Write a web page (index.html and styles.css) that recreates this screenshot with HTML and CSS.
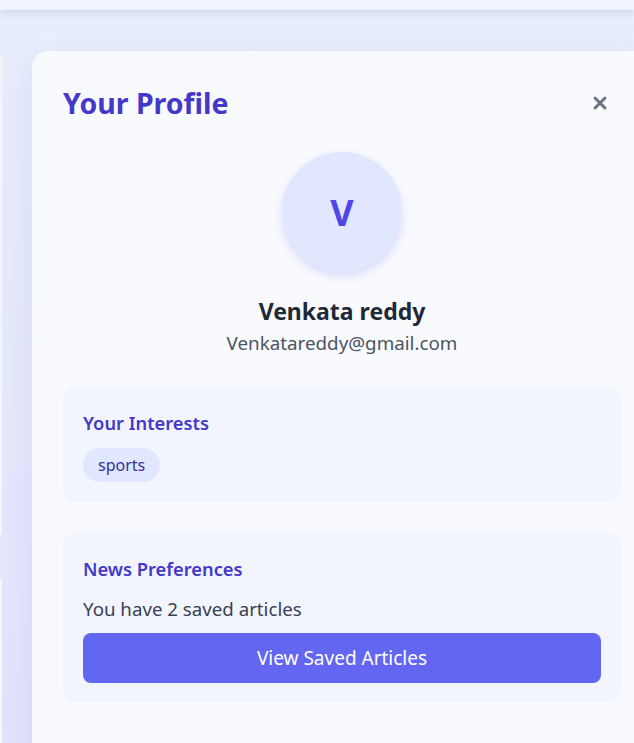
FILE: index.html
```html
<!DOCTYPE html>
<html lang="en">
<head>
<meta charset="utf-8">
<title>Your Profile</title>
<link rel="stylesheet" href="styles.css">
</head>
<body>
<header class="topbar"></header>
<div class="layout">
  <aside class="side">
    <div class="side-card side-card-a"></div>
    <div class="side-card side-card-b"></div>
  </aside>
  <section class="panel">
    <div class="panel-head">
      <h2 class="panel-title">Your Profile</h2>
      <button class="close" aria-label="Close">
        <svg width="16" height="16" viewBox="0 0 16 16"><path d="M3 3 L13 13 M13 3 L3 13" stroke="#6b7280" stroke-width="3" stroke-linecap="round"/></svg>
      </button>
    </div>
    <div class="identity">
      <div class="avatar">V</div>
      <div class="name">Venkata reddy</div>
      <div class="email">Venkatareddy@gmail.com</div>
    </div>
    <div class="box">
      <h3 class="box-title">Your Interests</h3>
      <div class="chips"><span class="chip">sports</span></div>
    </div>
    <div class="box box-prefs">
      <h3 class="box-title">News Preferences</h3>
      <p class="saved">You have 2 saved articles</p>
      <button class="primary">View Saved Articles</button>
    </div>
  </section>
</div>
</body>
</html>
```
FILE: styles.css
```css
* { box-sizing: border-box; }
html, body { margin: 0; padding: 0; }
body {
  width: 634px;
  height: 743px;
  overflow: hidden;
  font-family: "Noto Sans", "Open Sans", sans-serif;
  background: linear-gradient(180deg, #e8eefc 0%, #e5e9fb 50%, #e2e3fa 100%);
}
.topbar {
  height: 10px;
  background: #f0f4fe;
  box-shadow: 0 2px 8px rgba(60, 70, 120, 0.18);
  position: relative;
  z-index: 2;
}
.layout {
  display: flex;
  gap: 30px;
}
.side {
  width: 2px;
  flex-shrink: 0;
  display: flex;
  flex-direction: column;
  gap: 43px;
  padding-top: 45px;
}
.side-card {
  width: 2px;
  background: #f4f6fe;
  border-radius: 0 8px 8px 0;
}
.side-card-a { height: 480px; }
.side-card-b { height: 300px; }
.panel {
  flex-shrink: 0;
  width: 620px;
  margin-top: 41px;
  padding: 31px;
  background: #f9fafe;
  border-radius: 16px;
  box-shadow: 0 10px 30px rgba(99, 102, 241, 0.12);
}
.panel-head {
  display: flex;
  align-items: center;
  justify-content: space-between;
  height: 42px;
}
.panel-title {
  margin: 0;
  font-size: 28.5px;
  font-weight: 700;
  color: #4338ca;
  line-height: 42px;
}
.close {
  border: 0;
  background: none;
  padding: 0;
  margin-right: 13px;
  width: 16px;
  height: 16px;
  display: flex;
}
.identity {
  display: flex;
  flex-direction: column;
  align-items: center;
  margin-top: 28px;
}
.avatar {
  width: 120px;
  height: 120px;
  border-radius: 50%;
  background: #e0e7ff;
  color: #4f46e5;
  font-size: 36px;
  font-weight: 700;
  display: flex;
  align-items: center;
  justify-content: center;
  box-shadow: 0 4px 10px rgba(79, 70, 229, 0.18);
}
.name {
  margin-top: 22px;
  font-size: 23px;
  font-weight: 700;
  color: #1f2937;
  line-height: 34px;
}
.email {
  margin-top: 1px;
  font-size: 18.8px;
  color: #4b5563;
  line-height: 28px;
}
.box {
  margin-top: 30px;
  background: #f3f5fe;
  border-radius: 12px;
  padding: 22px 20px 20px;
}
.box-prefs {
  margin-top: 31px;
  padding-bottom: 19px;
}
.box-title {
  margin: 0;
  font-size: 18.3px;
  font-weight: 600;
  color: #4338ca;
  line-height: 28px;
}
.chips {
  margin-top: 11px;
  display: flex;
  gap: 8px;
}
.chip {
  background: #e0e7ff;
  color: #3730a3;
  font-size: 16px;
  line-height: 24px;
  padding: 5px 15px;
  border-radius: 17px;
}
.saved {
  margin: 12px 0 0;
  font-size: 18.7px;
  color: #374151;
  line-height: 28px;
}
.primary {
  display: block;
  width: 100%;
  margin-top: 10px;
  height: 50px;
  border: 0;
  border-radius: 8px;
  background: #6366f1;
  color: #fff;
  font-family: inherit;
  font-size: 19px;
}
```
